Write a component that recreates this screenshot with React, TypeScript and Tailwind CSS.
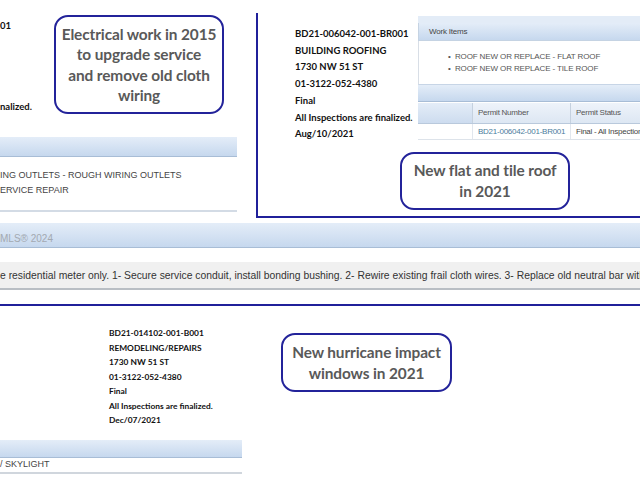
import React from "react";

const callout =
  "shrink-0 border-2 border-[#23239a] rounded-[14px] flex flex-col items-center justify-center text-center text-[#595959] font-bold leading-[20.5px] text-[15.4px] tracking-[-0.1px] whitespace-nowrap";

const bar =
  "bg-gradient-to-b from-[#e4edf8] to-[#c6d8ee] border-b border-[#a8bdd6]";

export default function App() {
  return (
    <div
      className="w-[640px] h-[480px] bg-white overflow-hidden flex flex-col"
      style={{ fontFamily: "Lato, 'Noto Sans', sans-serif" }}
    >
      {/* Section A */}
      <div className="flex h-[218px] shrink-0">
        {/* left */}
        <div className="w-[237px] shrink-0 flex flex-col">
          <div className="flex h-[137px]">
            <div className="w-[54px] shrink-0 flex flex-col text-[9.5px] font-bold text-[#111] pt-[19px] leading-[14px]">
              <span>01</span>
              <span className="mt-[67px]">nalized.</span>
            </div>
            <div className={`${callout} mt-[15px] w-[170px] h-[99px]`}>
              <span>Electrical work in 2015</span>
              <span>to upgrade service</span>
              <span>and remove old cloth</span>
              <span>wiring</span>
            </div>
          </div>
          <div className={`${bar} h-[20px]`} />
          <div
            className="flex flex-col pt-[11px] text-[9px] leading-[15px] text-[#444] whitespace-nowrap h-[55px] border-b-2 border-[#d3dbe5]"
            style={{ fontFamily: "'Liberation Sans', Arial, sans-serif" }}
          >
            <span>ING OUTLETS - ROUGH WIRING OUTLETS</span>
            <span>ERVICE REPAIR</span>
          </div>
        </div>
        {/* right boxed */}
        <div className="ml-[19px] flex-1 min-w-0 mt-[13px] h-[205px] border-l-2 border-b-2 border-[#20209a] flex flex-col">
          <div className="flex">
            <div className="w-[160px] shrink-0 pl-[37px] pt-[13px] flex flex-col text-[9.5px] font-bold text-[#111] leading-[16.7px] whitespace-nowrap">
              <span>BD21-006042-001-BR001</span>
              <span>BUILDING ROOFING</span>
              <span>1730 NW 51 ST</span>
              <span>01-3122-052-4380</span>
              <span>Final</span>
              <span>All Inspections are finalized.</span>
              <span>Aug/10/2021</span>
            </div>
            <div
              className="flex-1 min-w-0 mt-[3px] flex flex-col text-[#444] whitespace-nowrap"
              style={{ fontFamily: "'Liberation Sans', Arial, sans-serif" }}
            >
              <div className="h-[7px] bg-[#e3ecf7]" />
              <div className={`${bar} h-[18px] flex items-center pl-[10px] text-[8px] tracking-[-0.2px] border-l border-[#c5d3e3]`}>
                Work Items
              </div>
              <div className="h-[44px] border-l border-[#d8dee6] border-b border-b-[#c7d5e6] flex flex-col justify-center pl-[29px] text-[8px] tracking-[-0.12px] leading-[12px] text-[#555]">
                <span>•&nbsp; ROOF NEW OR REPLACE - FLAT ROOF</span>
                <span>•&nbsp; ROOF NEW OR REPLACE - TILE ROOF</span>
              </div>
              <div className={`${bar} h-[17px]`} />
              <div className="flex h-[21px] mt-[1px] text-[8px] tracking-[-0.25px] text-[#555] border-b border-[#b9c9dc]">
                <div className="w-[54px] shrink-0 bg-gradient-to-b from-[#e4edf8] to-[#cddcef]" />
                <div className="w-[98px] shrink-0 bg-gradient-to-b from-[#eef3fa] to-[#dde7f3] border-l border-[#c5d1df] flex items-center pl-[5px]">
                  Permit Number
                </div>
                <div className="flex-1 bg-gradient-to-b from-[#eef3fa] to-[#dde7f3] border-l border-[#c5d1df] flex items-center pl-[5px]">
                  Permit Status
                </div>
              </div>
              <div className="flex h-[16px] text-[8px] tracking-[-0.25px] border-b border-[#dde3ea]">
                <div className="w-[54px] shrink-0" />
                <div className="w-[98px] shrink-0 border-l border-[#e2e7ee] flex items-center pl-[5px] text-[#4b7c9c]">
                  BD21-006042-001-BR001
                </div>
                <div className="flex-1 border-l border-[#e2e7ee] flex items-center pl-[5px] text-[#444] overflow-hidden">
                  Final - All Inspection
                </div>
              </div>
            </div>
          </div>
          <div className={`${callout} ml-[142px] mt-[9px] w-[170px] h-[58px]`}>
            <span>New flat and tile roof</span>
            <span>in 2021</span>
          </div>
        </div>
      </div>

      {/* Section B */}
      <div
        className="flex flex-col shrink-0 whitespace-nowrap overflow-hidden"
        style={{ fontFamily: "'Liberation Sans', Arial, sans-serif" }}
      >
        <div className={`${bar} mt-[5px] h-[25px] flex items-end pb-[1px] text-[10px] text-[#a3a9b1]`}>
          MLS® 2024
        </div>
        <div className="mt-[14px] h-[28px] bg-[#f0f0f0] border-b-2 border-[#b9bec4] flex items-end pb-[4px] text-[10.35px] text-[#333]">
          e residential meter only. 1- Secure service conduit, install bonding bushing. 2- Rewire existing frail cloth wires. 3- Replace old neutral bar with
        </div>
        <div className="mt-[14px] h-[2px] bg-[#20209a]" />
      </div>

      {/* Section C */}
      <div className="flex flex-1">
        <div className="w-[242px] shrink-0 flex flex-col">
          <div className="pl-[109px] pt-[20px] flex flex-col text-[8.4px] font-bold text-[#111] leading-[14.5px] whitespace-nowrap h-[134px]">
            <span>BD21-014102-001-B001</span>
            <span>REMODELING/REPAIRS</span>
            <span>1730 NW 51 ST</span>
            <span>01-3122-052-4380</span>
            <span>Final</span>
            <span>All Inspections are finalized.</span>
            <span>Dec/07/2021</span>
          </div>
          <div className={`${bar} h-[18px]`} />
          <div
            className="h-[16px] flex items-center text-[9px] text-[#444] border-b-2 border-[#d0d6dd]"
            style={{ fontFamily: "'Liberation Sans', Arial, sans-serif" }}
          >
            / SKYLIGHT
          </div>
        </div>
        <div className={`${callout} ml-[39px] mt-[27px] w-[171px] h-[59px]`}>
          <span>New hurricane impact</span>
          <span>windows in 2021</span>
        </div>
      </div>
    </div>
  );
}
